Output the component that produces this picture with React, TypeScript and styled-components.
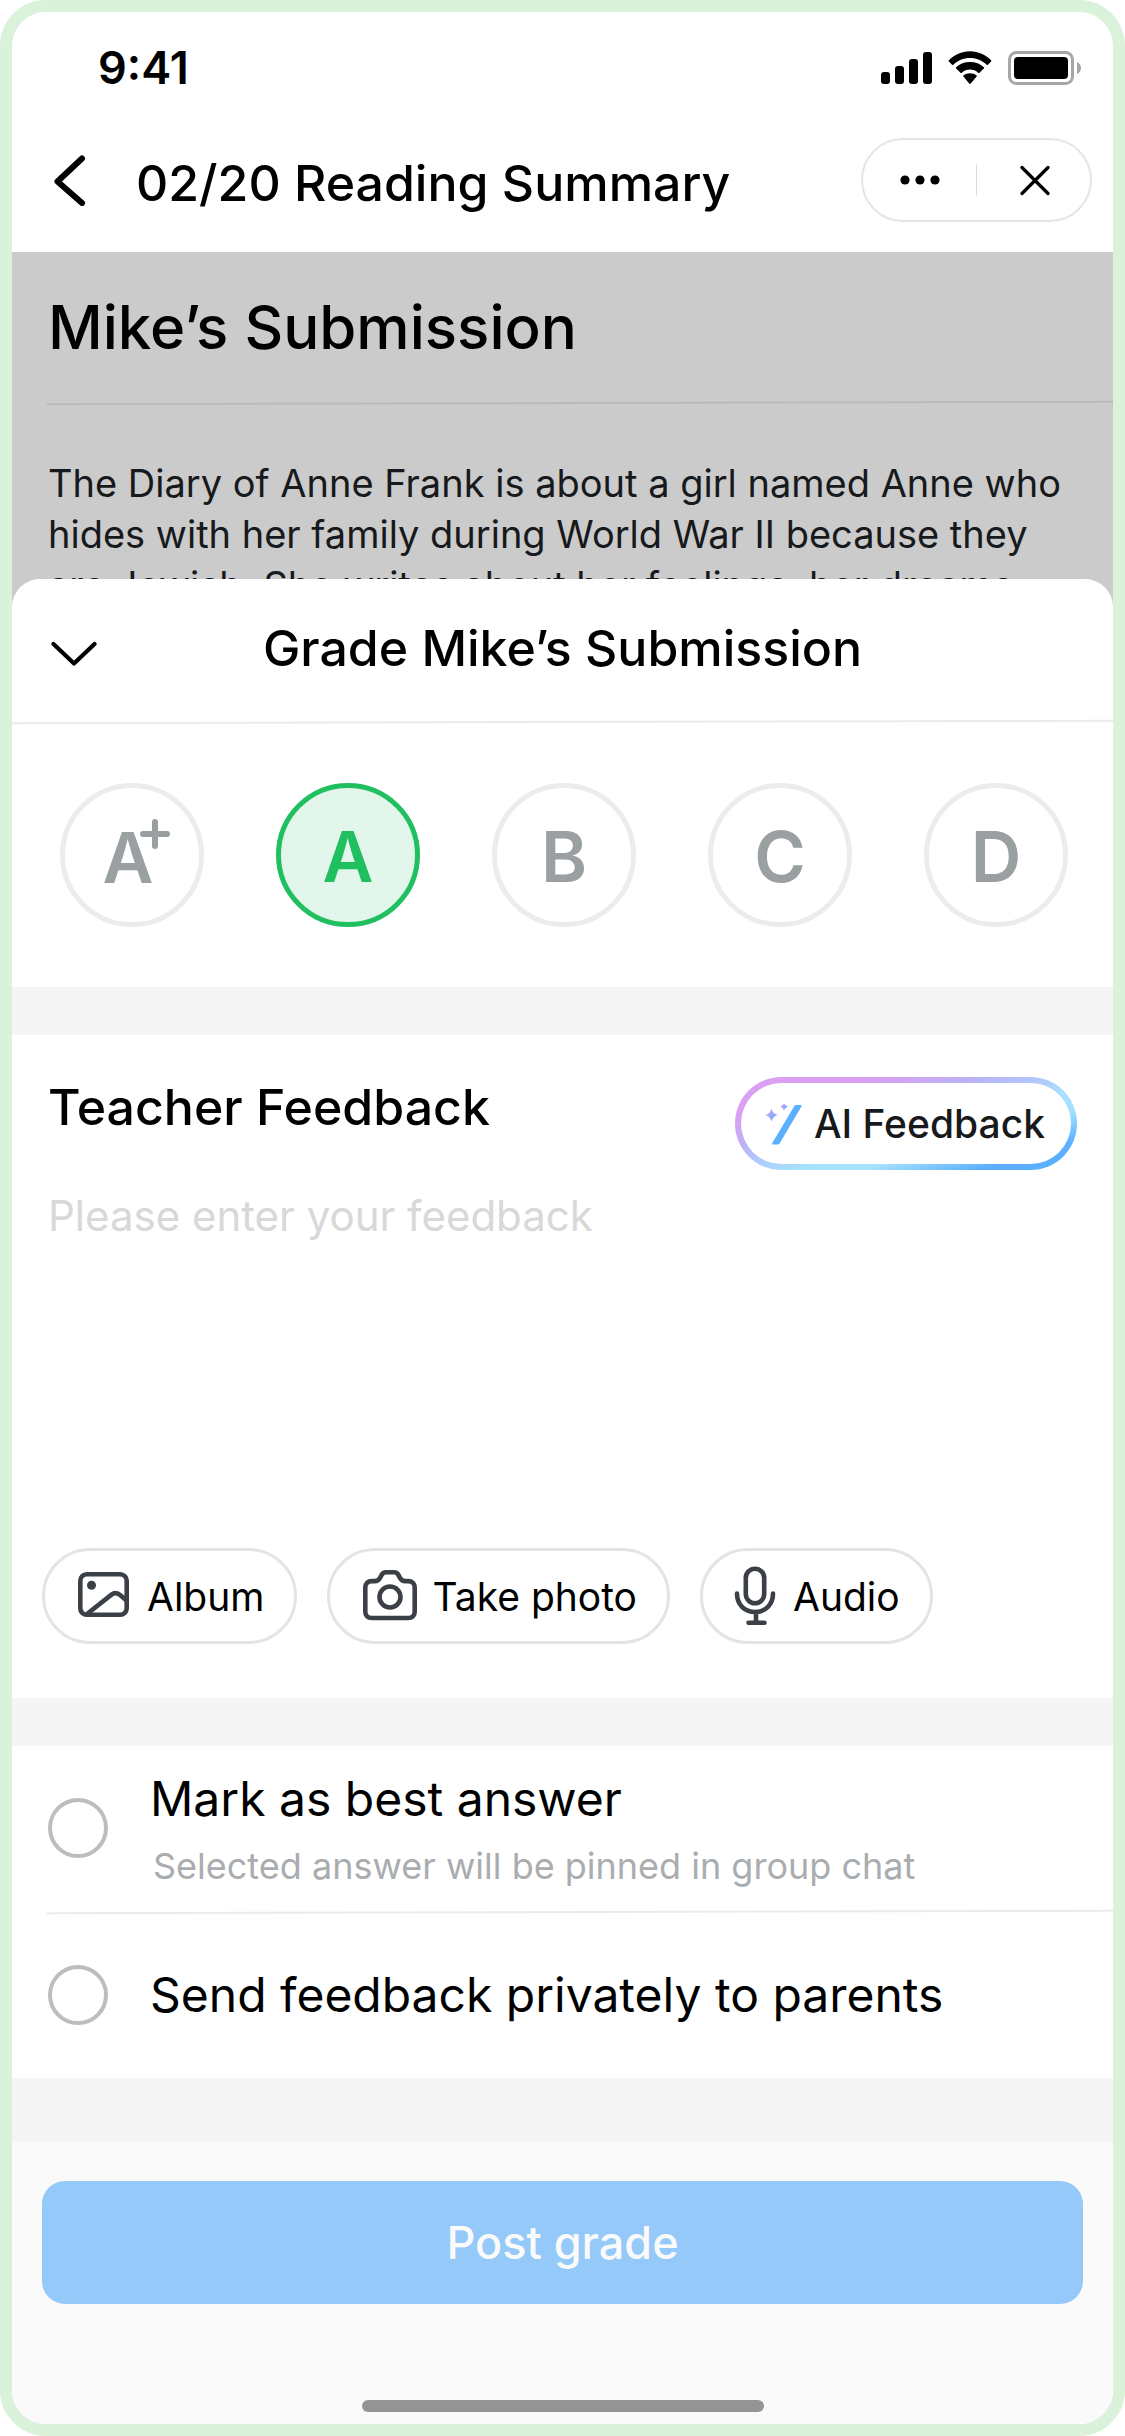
import React, { useState } from 'react';
import styled, { createGlobalStyle } from 'styled-components';

const GlobalStyle = createGlobalStyle`
  *, *::before, *::after { box-sizing: border-box; }
  body {
    margin: 0;
    background: #fff;
    color: #000;
    font-family: Inter, "Liberation Sans", sans-serif;
  }
  button, input, textarea { font: inherit; color: inherit; }
  button { padding: 0; border: 0; background: none; cursor: pointer; }
  h1, h2, h3, p { margin: 0; }
  svg { display: block; flex: none; }
`;

const Frame = styled.div`
  display: flex;
  flex-direction: column;
  min-height: 100vh;
  border: 12px solid #daf1da;
  border-radius: 46px;
  overflow: hidden;
`;

const StatusBar = styled.div`
  display: flex;
  align-items: center;
  justify-content: space-between;
  height: 112px;
  padding: 0 32px 0 86px;
`;

const Clock = styled.time`
  font-size: 45px;
  line-height: 54px;
  font-weight: 600;
`;

const StatusIcons = styled.div`
  display: flex;
  align-items: center;
  gap: 15px;
`;

const NavBar = styled.header`
  display: flex;
  align-items: center;
  height: 128px;
  padding: 0 21px 16px 26px;
`;

const IconButton = styled.button`
  display: flex;
  align-items: center;
  justify-content: center;
  width: 64px;
  height: 80px;
`;

const NavTitle = styled.h1`
  flex: 1;
  padding: 6px 0 0 34px;
  font-size: 50px;
  line-height: 60px;
  font-weight: 500;
  white-space: nowrap;
`;

const Capsule = styled.div`
  display: flex;
  align-items: center;
  height: 84px;
  border: 2px solid #e5e5e5;
  border-radius: 42px;
`;

const CapsuleButton = styled(IconButton)`
  width: 113px;
`;

const CapsuleRule = styled.span`
  width: 1px;
  height: 32px;
  background: #dcdcdc;
`;

const Submission = styled.article`
  padding-top: 40px;
  background: #cbcbcb;
`;

const SubmissionTitle = styled.h2`
  padding: 0 36px;
  font-size: 60px;
  line-height: 70px;
  font-weight: 500;
`;

const Rule = styled.div<{ $inset?: number; $dark?: boolean }>`
  height: 2px;
  margin-left: ${(p) => p.$inset ?? 0}px;
  background: ${(p) => (p.$dark ? '#bababa' : '#ebebeb')};
  transform: rotate(-0.13deg);
`;

const SubmissionRule = styled(Rule)`
  margin-top: 40px;
`;

const SubmissionText = styled.p`
  padding: 54px 20px 0 36px;
  color: #17191b;
  font-size: 38px;
  line-height: 51px;
  white-space: pre-line;
`;

const Sheet = styled.main`
  position: relative;
  display: flex;
  flex: 1;
  flex-direction: column;
  margin-top: -32px;
  border-radius: 28px 28px 0 0;
  background: #fff;
`;

const SheetHeader = styled.div`
  display: grid;
  grid-template-columns: 123px 1fr 123px;
  align-items: center;
  justify-items: center;
  height: 142px;
`;

const SheetTitle = styled.h2`
  padding-bottom: 4px;
  font-size: 50px;
  line-height: 60px;
  font-weight: 500;
  white-space: nowrap;
`;

const CollapseButton = styled(IconButton)`
  padding-top: 8px;
`;

const GradeRow = styled.fieldset`
  display: flex;
  justify-content: space-between;
  margin: 0;
  padding: 60px 45px 60px 48px;
  border: 0;
`;

const HiddenRadio = styled.input`
  position: absolute;
  opacity: 0;
`;

const GradeOption = styled.label<{ $on: boolean }>`
  position: relative;
  display: flex;
  align-items: center;
  justify-content: center;
  width: 144px;
  height: 144px;
  padding-top: 3px;
  border: 5px solid ${(p) => (p.$on ? '#20bf60' : '#ebecee')};
  border-radius: 50%;
  background: ${(p) => (p.$on ? '#e3f6eb' : '#fff')};
  color: ${(p) => (p.$on ? '#20bf60' : '#9aa0a2')};
  font-size: 70px;
  line-height: 84px;
  font-weight: 600;
  cursor: pointer;
`;

const PlusMark = styled.svg`
  position: absolute;
  top: 31px;
  right: 29px;
`;

const PlusLetter = styled.span`
  padding: 2px 8px 0 0;
`;

const Band = styled.div<{ $tall?: boolean }>`
  height: ${(p) => (p.$tall ? 64 : 48)}px;
  background: #f5f5f5;
`;

const Feedback = styled.section`
  padding: 42px 36px 54px;
`;

const FeedbackHead = styled.div`
  display: flex;
  align-items: flex-start;
  justify-content: space-between;
`;

const FeedbackTitle = styled.label`
  font-size: 50px;
  line-height: 60px;
  font-weight: 500;
`;

const AiButton = styled.button`
  display: flex;
  align-items: center;
  gap: 12px;
  height: 93px;
  padding: 0 26px 0 24px;
  border: 6px solid transparent;
  border-radius: 47px;
  background:
    linear-gradient(#fff, #fff) padding-box,
    linear-gradient(164deg, #dba0f3 22%, #b9b4f7 38%, #a6e2ff 58%, #a6e2ff 68%, #5ab0ff 85%) border-box;
  color: #17191b;
  font-size: 39px;
  font-weight: 500;
  white-space: nowrap;
`;

const FeedbackInput = styled.textarea`
  display: block;
  width: 100%;
  height: 318px;
  margin: 20px 0 40px;
  padding: 0;
  border: 0;
  outline: 0;
  resize: none;
  background: none;
  font-size: 42px;
  line-height: 51px;
  &::placeholder { color: #d8d8d8; opacity: 1; }
`;

const Attachments = styled.div`
  display: flex;
  gap: 30px;
  margin-left: -6px;
`;

const Chip = styled.button`
  display: flex;
  align-items: center;
  gap: 15px;
  height: 96px;
  padding: 0 30px;
  border: 3px solid #e3e4e6;
  border-radius: 48px;
  font-size: 39px;
  white-space: nowrap;
`;

const OptionRow = styled.label`
  display: flex;
  align-items: center;
  gap: 42px;
  min-height: 165px;
  padding: 22px 36px 24px;
  cursor: pointer;
`;

const RoundCheck = styled.input`
  appearance: none;
  flex: none;
  width: 60px;
  height: 60px;
  margin: 0;
  border: 4px solid #bcbebd;
  border-radius: 50%;
  background: #fff;
  &:checked { border-width: 18px; border-color: #20bf60; }
`;

const OptionText = styled.span`
  display: flex;
  flex-direction: column;
  gap: 16px;
  font-size: 48px;
  line-height: 60px;
`;

const OptionHint = styled.small`
  padding-left: 3px;
  color: #aaadb0;
  font-size: 36px;
  line-height: 42px;
`;

const Footer = styled.footer`
  display: flex;
  flex: 1;
  flex-direction: column;
  align-items: center;
  justify-content: space-between;
  gap: 40px;
  padding: 39px 30px 12px;
  background: #fafafa;
`;

const PostButton = styled.button`
  width: 100%;
  height: 123px;
  border-radius: 23px;
  background: #94c9f9;
  color: #fafafa;
  font-size: 45px;
  font-weight: 500;
`;

const HomeIndicator = styled.div`
  width: 402px;
  height: 12px;
  border-radius: 6px;
  background: #949494;
`;

const SignalIcon = () => (
  <svg width="51" height="34" viewBox="0 0 51 34" aria-hidden="true">
    <rect x="0" y="21" width="9" height="12" rx="3" />
    <rect x="14" y="15" width="9" height="18" rx="3" />
    <rect x="28" y="8" width="9" height="25" rx="3" />
    <rect x="42" y="1" width="9" height="32" rx="3" />
  </svg>
);

const WifiIcon = () => (
  <svg width="46" height="34" viewBox="0 0 46 34" aria-hidden="true">
    <path d="M23 7.2c5.9 0 11.2 2.3 15.2 6.1.3.3.8.3 1.100 0l2.900-3c.3-.3.3-.8 0-1.100C37.200 4.200 30.500 1 23 1S8.800 4.200 3.800 9.200c-.3.3-.3.8 0 1.100l2.900 3c.3.3.8.3 1.100 0C11.800 9.500 17.100 7.200 23 7.200Z" transform="translate(-2.300 -.9) scale(1.100)" />
    <path d="M23 18.600c3.100 0 6 1.200 8.100 3.100.5.4 1 .4 1.400 0l4.400-4.200c.4-.4.400-.9 0-1.300C33.200 12.900 28.400 11 23 11s-10.200 1.900-13.900 5.200c-.4.4-.4.9 0 1.300l4.400 4.200c.4.4.9.4 1.400 0 2.100-1.900 5-3.100 8.100-3.100Z" />
    <path d="M29.600 25.600c.4-.4.4-.9 0-1.200C27.800 23 25.500 22.200 23 22.200s-4.800.8-6.600 2.200c-.4.3-.4.8 0 1.200l5.800 6.800c.5.5 1.100.5 1.600 0Z" />
  </svg>
);

const BatteryIcon = () => (
  <svg width="73" height="34" viewBox="0 0 73 34" aria-hidden="true">
    <rect x="1.500" y="1.500" width="63" height="31" rx="7" fill="none" stroke="#a3a7aa" strokeWidth="3" />
    <rect x="6" y="6" width="54" height="22" rx="4" />
    <path d="M69 11c2.500 1 4 3.300 4 6s-1.500 5-4 6Z" fill="#a3a7aa" />
  </svg>
);

const BackIcon = () => (
  <svg width="32" height="52" viewBox="0 0 32 52" fill="none" stroke="#000" strokeWidth="6" strokeLinecap="round" strokeLinejoin="round" aria-hidden="true">
    <path d="M28 4.500 3.500 27.500 28 49" />
  </svg>
);

const DotsIcon = () => (
  <svg width="40" height="10" viewBox="0 0 40 10" aria-hidden="true">
    <circle cx="5" cy="5" r="4.600" />
    <circle cx="20" cy="5" r="4.600" />
    <circle cx="35" cy="5" r="4.600" />
  </svg>
);

const CloseIcon = () => (
  <svg width="32" height="32" viewBox="0 0 32 32" fill="none" stroke="#000" strokeWidth="3.200" strokeLinecap="round" aria-hidden="true">
    <path d="M4 3.500 30 29.500M30 3.500 4 29.500" />
  </svg>
);

const ChevronDownIcon = () => (
  <svg width="46" height="26" viewBox="0 0 46 26" fill="none" stroke="#000" strokeWidth="4.200" strokeLinecap="round" strokeLinejoin="round" aria-hidden="true">
    <path d="M2.500 3 23 22.500 43.500 3" />
  </svg>
);

const WandIcon = () => (
  <svg width="37" height="42" viewBox="0 0 37 42" aria-hidden="true">
    <defs>
      <linearGradient id="spark" x1="0" y1="0" x2="1" y2="1">
        <stop offset="0" stopColor="#dba0f3" />
        <stop offset="1" stopColor="#5ab0ff" />
      </linearGradient>
    </defs>
    <path d="M29.500 2.800c.4-.6 1-.9 1.700-.9h4.300c.9 0 1.300.7.9 1.500L14.600 40.400c-.4.700-1 1.100-1.800 1.100H8.300c-1 0-1.500-.8-1-1.600Z" fill="#5ab0ff" />
    <path d="M6.500 5.500Q7.800 11 13 12 7.800 13 6.500 18.500 5.200 13 0 12 5.200 11 6.500 5.500Z" fill="url(#spark)" />
    <path d="M19 0Q19.800 3 23 3.800 19.800 4.600 19 7.600 18.200 4.600 15 3.800 18.200 3 19 0Z" fill="url(#spark)" />
  </svg>
);

const AlbumIcon = () => (
  <svg width="57" height="60" viewBox="0 0 57 60" fill="none" stroke="#3b4046" strokeWidth="4.600" strokeLinejoin="round" aria-hidden="true">
    <rect x="5.300" y="8.300" width="46.400" height="40.400" rx="6.500" />
    <path d="M12 48 36.500 28.600c2.600-2 5.400-2 8 0L51.500 34.500" />
    <circle cx="16.500" cy="19.300" r="4.500" fill="#3b4046" stroke="none" />
  </svg>
);

const CameraIcon = () => (
  <svg width="57" height="60" viewBox="-3 0 57 60" fill="none" stroke="#3b4046" strokeWidth="4.600" strokeLinejoin="round" aria-hidden="true">
    <path d="M22.800 6.300h8.400c2 0 3.400 1 4.300 2.800l1.300 2.500c1.200 2.300 2.800 3.500 5.400 3.500h3c4.100 0 6.500 2.400 6.500 6.300v24.300c0 4-2.400 6.300-6.500 6.300H8.800c-4.100 0-6.500-2.300-6.500-6.300V21.400c0-3.900 2.400-6.300 6.500-6.300h3c2.600 0 4.200-1.200 5.400-3.500l1.300-2.500c.9-1.800 2.300-2.800 4.300-2.800Z" />
    <circle cx="27" cy="31" r="10.500" />
  </svg>
);

const MicIcon = () => (
  <svg width="45" height="60" viewBox="0 0 45 60" fill="none" stroke="#3b4046" strokeWidth="4.600" strokeLinecap="round" aria-hidden="true">
    <rect x="12.800" y="2.800" width="18.400" height="34.400" rx="9.200" />
    <path d="M4 27.500C4 38.500 11.500 46 22 46s18-7.500 18-18.500M23 46v10.500M15.500 56.800h16" />
  </svg>
);

const GRADES = ['A+', 'A', 'B', 'C', 'D'];

const ATTACHMENTS = [
  { label: 'Album', Icon: AlbumIcon },
  { label: 'Take photo', Icon: CameraIcon },
  { label: 'Audio', Icon: MicIcon },
];

const ESSAY = `The Diary of Anne Frank is about a girl named Anne who
hides with her family during World War II because they
are Jewish. She writes about her feelings, her dreams`;

export default function App() {
  const [grade, setGrade] = useState('A');

  return (
    <>
      <GlobalStyle />
      <Frame>
        <StatusBar>
          <Clock>9:41</Clock>
          <StatusIcons>
            <SignalIcon />
            <WifiIcon />
            <BatteryIcon />
          </StatusIcons>
        </StatusBar>

        <NavBar>
          <IconButton type="button" aria-label="Back"><BackIcon /></IconButton>
          <NavTitle>02/20 Reading Summary</NavTitle>
          <Capsule>
            <CapsuleButton type="button" aria-label="More"><DotsIcon /></CapsuleButton>
            <CapsuleRule />
            <CapsuleButton type="button" aria-label="Close"><CloseIcon /></CapsuleButton>
          </Capsule>
        </NavBar>

        <Submission>
          <SubmissionTitle>Mike’s Submission</SubmissionTitle>
          <SubmissionRule $inset={35} $dark />
          <SubmissionText>{ESSAY}</SubmissionText>
        </Submission>

        <Sheet>
          <SheetHeader>
            <CollapseButton type="button" aria-label="Collapse"><ChevronDownIcon /></CollapseButton>
            <SheetTitle>Grade Mike’s Submission</SheetTitle>
          </SheetHeader>
          <Rule />

          <GradeRow aria-label="Grade">
            {GRADES.map((g) => (
              <GradeOption key={g} $on={g === grade}>
                <HiddenRadio
                  type="radio"
                  name="grade"
                  value={g}
                  aria-label={g}
                  checked={g === grade}
                  onChange={() => setGrade(g)}
                />
                {g === 'A+' ? (
                  <>
                    <PlusLetter>A</PlusLetter>
                    <PlusMark width="30" height="30" viewBox="0 0 30 30" stroke="currentColor" strokeWidth="6" strokeLinecap="round" aria-hidden="true">
                      <path d="M3 15h24M15 3v24" />
                    </PlusMark>
                  </>
                ) : (
                  g
                )}
              </GradeOption>
            ))}
          </GradeRow>

          <Band />

          <Feedback>
            <FeedbackHead>
              <FeedbackTitle htmlFor="feedback">Teacher Feedback</FeedbackTitle>
              <AiButton type="button"><WandIcon />AI Feedback</AiButton>
            </FeedbackHead>
            <FeedbackInput id="feedback" placeholder="Please enter your feedback" />
            <Attachments>
              {ATTACHMENTS.map(({ label, Icon }) => (
                <Chip key={label} type="button"><Icon />{label}</Chip>
              ))}
            </Attachments>
          </Feedback>

          <Band />

          <OptionRow>
            <RoundCheck type="checkbox" />
            <OptionText>
              Mark as best answer
              <OptionHint>Selected answer will be pinned in group chat</OptionHint>
            </OptionText>
          </OptionRow>
          <Rule $inset={35} />
          <OptionRow>
            <RoundCheck type="checkbox" />
            <OptionText>Send feedback privately to parents</OptionText>
          </OptionRow>

          <Band $tall />

          <Footer>
            <PostButton type="button">Post grade</PostButton>
            <HomeIndicator />
          </Footer>
        </Sheet>
      </Frame>
    </>
  );
}
